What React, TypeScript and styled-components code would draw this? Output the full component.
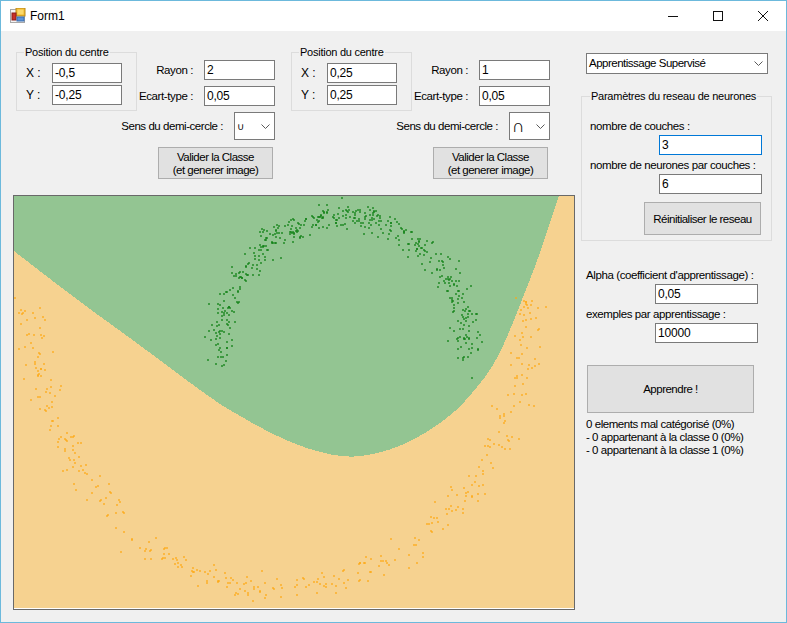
import * as React from 'react'
import styled, { createGlobalStyle } from 'styled-components'

const GlobalStyle = createGlobalStyle`
html, body {
  margin: 0;
  padding: 0;
  background: #f0f0f0;
  overflow: hidden;
}
* {
  box-sizing: border-box;
}
`

const Win = styled.div`
width: 787px;
height: 623px;
display: flex;
flex-direction: column;
border: 1px solid #6cb9dc;
background: #f0f0f0;
color: #000;
font-family: "Liberation Sans", Arial, sans-serif;
font-size: 11px;
line-height: 13px;
`

const TitleBar = styled.div`
height: 30px;
flex: none;
display: flex;
align-items: center;
background: #fff;
padding-left: 9px;
`

const TitleText = styled.span`
margin-left: 4px;
font-size: 12px;
flex: 1;
`

const WinButton = styled.div<{ $w?: number }>`
width: ${(p) => p.$w ?? 45}px;
height: 30px;
display: flex;
align-items: center;
justify-content: center;
color: #111;
`

const Body = styled.div`
flex: 1;
display: flex;
gap: 6px;
padding: 15px 0 0 12px;
`

const LeftColumn = styled.div`
width: 562px;
display: flex;
flex-direction: column;
`

const Panels = styled.div`
display: flex;
gap: 16px;
padding-left: 3px;
`

const Panel = styled.div`
width: 259px;
display: flex;
flex-direction: column;
align-items: flex-end;
`

const PanelTop = styled.div`
width: 100%;
display: flex;
`

const Group = styled.fieldset<{ $w: number; $h: number; $pad: number }>`
margin: 0;
width: ${(p) => p.$w}px;
height: ${(p) => p.$h}px;
padding: ${(p) => p.$pad}px 7px 0;
border: 1px solid #dcdcdc;
min-width: 0;
flex: none;
`

const GroupTitle = styled.legend`
padding: 0 1px;
height: 13px;
white-space: nowrap;
letter-spacing: -0.25px;
`

const CoordRow = styled.div`
display: flex;
align-items: center;
margin-bottom: 2px;
padding-left: 2px;
`

const CoordLabel = styled.span`
width: 26px;
font-size: 12px;
`

const Field = styled.div<{ $w: number; $active?: boolean }>`
width: ${(p) => p.$w}px;
height: 20px;
flex: none;
display: flex;
align-items: center;
padding: 0 2px;
background: #fff;
border: 1px solid ${(p) => (p.$active ? '#0078d7' : '#7a7a7a')};
font-size: 12px;
letter-spacing: -0.2px;
`

const Params = styled.div`
flex: 1;
min-width: 0;
display: flex;
flex-direction: column;
gap: 6px;
padding-top: 14px;
`

const ParamRow = styled.div`
display: flex;
align-items: center;
justify-content: flex-end;
gap: 11px;
`

const ParamLabel = styled.span`
font-size: 11.5px;
letter-spacing: -0.4px;
white-space: nowrap;
`

const SenseRow = styled.div`
display: flex;
align-items: center;
gap: 11px;
margin-top: 1px;
`

const Combo = styled.div<{ $w: number; $h: number }>`
width: ${(p) => p.$w}px;
height: ${(p) => p.$h}px;
display: flex;
align-items: center;
justify-content: space-between;
padding: 0 4px 0 2px;
background: #fff;
border: 1px solid #7a7a7a;
`

const ComboText = styled.span<{ $size: number }>`
font-size: ${(p) => p.$size}px;
white-space: nowrap;
font-family: "Liberation Sans", sans-serif;
`

const ComboLabel = styled.span`
font-size: 11.5px;
letter-spacing: -0.45px;
white-space: nowrap;
`

const ModeLabel = styled.span`
font-size: 11.5px;
letter-spacing: -0.5px;
white-space: nowrap;
`

const FormButton = styled.div<{ $w: number; $h: number }>`
width: ${(p) => p.$w}px;
height: ${(p) => p.$h}px;
display: flex;
align-items: center;
justify-content: center;
text-align: center;
padding-top: 1px;
background: #e1e1e1;
border: 1px solid #adadad;
font-size: 11.5px;
letter-spacing: -0.5px;
`

const ClassButton = styled(FormButton)`
margin: 7px 2px 0 0;
`

const PlotFrame = styled.div`
margin-top: 16px;
width: 562px;
height: 415px;
border: 1px solid #696969;
background: #fff;
padding: 0 1px 1px 0;
`

const PlotSvg = styled.svg`
display: block;
width: 560px;
height: 412px;
background: #93c592;
`

const RightColumn = styled.div`
width: 191px;
display: flex;
flex-direction: column;
padding-top: 7px;
`

const ModeCombo = styled(Combo)`
margin-left: 5px;
`

const NetGroup = styled(Group)`
margin-top: 16px;
padding-left: 8px;
`

const TextLine = styled.div<{ $top: number }>`
margin-top: ${(p) => p.$top}px;
font-size: 11.5px;
letter-spacing: -0.4px;
white-space: nowrap;
`

const NetField = styled(Field)`
margin: 2px 0 0 69px;
`

const ResetButton = styled(FormButton)`
margin: 8px 0 0 54px;
`

const TrainBlock = styled.div`
padding: 28px 0 0 5px;
`

const TrainField = styled(Field)`
margin: 2px 0 0 69px;
`

const TrainButton = styled(FormButton)`
margin: 22px 0 0 1px;
`

const Stats = styled.div`
margin-top: 5px;
font-size: 11.5px;
letter-spacing: -0.45px;
white-space: nowrap;
`

// seeded so the scatter is the same at every run
const mulberry = (seed: number) => () => {
    seed = (seed + 0x6d2b79f5) | 0
    let t = Math.imul(seed ^ (seed >>> 15), 1 | seed)
    t = (t + Math.imul(t ^ (t >>> 7), 61 | t)) ^ t
    return ((t ^ (t >>> 14)) >>> 0) / 4294967296
}

// plot origin on the page is (14,196), dots and outline are given relative to it
const halfEllipse = (seed: number, count: number, cx: number, cy: number, rx: number, ry: number, dir: 1 | -1, spread: number) => {
    const rnd = mulberry(seed)
    const gauss = () => Math.sqrt(-2 * Math.log(1 - rnd())) * Math.cos(2 * Math.PI * rnd())
    return Array.from({ length: count }, () => {
        const a = rnd() * Math.PI
        return {
            x: Math.round(cx + Math.cos(a) * rx + gauss() * spread - 14),
            y: Math.round(cy + dir * Math.sin(a) * ry + gauss() * spread - 196),
        }
    })
}

const greenDots = halfEllipse(7, 480, 344, 360, 126, 144, -1, 7)
const orangeDots = halfEllipse(23, 400, 280, 298, 250, 290, 1, 8)

const boundary = [
    [14, 251], [73, 297], [133, 340], [213, 400], [240, 416], [270, 433], [300, 446], [320, 452],
    [343, 457], [365, 456], [390, 450], [413, 440], [435, 427], [457, 410], [473, 392], [487, 375],
    [500, 353], [513, 323], [523, 297], [531, 277], [541, 250], [550, 222], [559, 196],
].map(([x, y]) => [x - 14, y - 196])

// smooth the boundary through the midpoints of its segments
const orangeArea = boundary.reduce((d, p, i) => {
    if (i === 0) return `M${p[0]} ${p[1]}`
    const next = boundary[i + 1] ?? p
    return `${d} Q${p[0]} ${p[1]} ${(p[0] + next[0]) / 2} ${(p[1] + next[1]) / 2}`
}, '') + ' L560 0 L560 412 L0 412 Z'

const Chevron = () => (
    <svg width="9" height="5" viewBox="0 0 9 5">
        <path d="M0.5 0.5 L4.5 4.5 L8.5 0.5" fill="none" stroke="#5a5a5a" strokeWidth="1" />
    </svg>
)

const AppIcon = () => (
    <svg width="16" height="16" viewBox="0 0 16 16">
        <rect x="0.5" y="1.5" width="14" height="13" fill="#f4f4f4" stroke="#a8a8a8" />
        <rect x="6" y="0" width="9" height="8" fill="#f2b92e" stroke="#b98a1c" strokeWidth="1" />
        <rect x="7.5" y="1.5" width="6" height="5" fill="#fbd96a" />
        <rect x="2" y="5" width="4" height="7" fill="#c9302a" stroke="#8c1f1a" strokeWidth="1" />
        <rect x="7" y="9" width="7" height="4" fill="#5b93d8" stroke="#3a6eb0" strokeWidth="1" />
    </svg>
)

const ClassPanel = ({ x, y, rayon, sens, sensSize }: { x: string; y: string; rayon: string; sens: string; sensSize: number }) => (
    <Panel>
        <PanelTop>
            <Group $w={121} $h={65} $pad={4}>
                <GroupTitle>Position du centre</GroupTitle>
                <CoordRow>
                    <CoordLabel>X :</CoordLabel>
                    <Field $w={70}>{x}</Field>
                </CoordRow>
                <CoordRow>
                    <CoordLabel>Y :</CoordLabel>
                    <Field $w={70}>{y}</Field>
                </CoordRow>
            </Group>
            <Params>
                <ParamRow>
                    <ParamLabel>Rayon :</ParamLabel>
                    <Field $w={71}>{rayon}</Field>
                </ParamRow>
                <ParamRow>
                    <ParamLabel>Ecart-type :</ParamLabel>
                    <Field $w={71}>0,05</Field>
                </ParamRow>
            </Params>
        </PanelTop>
        <SenseRow>
            <ComboLabel>Sens du demi-cercle :</ComboLabel>
            <Combo $w={41} $h={28}>
                <ComboText $size={sensSize}>{sens}</ComboText>
                <Chevron />
            </Combo>
        </SenseRow>
        <ClassButton $w={115} $h={32}>
            Valider la Classe
            <br />
            (et generer image)
        </ClassButton>
    </Panel>
)

export default function App() {
    return (
        <Win>
            <GlobalStyle />
            <TitleBar>
                <AppIcon />
                <TitleText>Form1</TitleText>
                <WinButton>
                    <svg width="10" height="10" viewBox="0 0 10 10">
                        <path d="M0 5.5 H10" stroke="currentColor" strokeWidth="1" />
                    </svg>
                </WinButton>
                <WinButton>
                    <svg width="10" height="10" viewBox="0 0 10 10">
                        <rect x="0.5" y="0.5" width="9" height="9" fill="none" stroke="currentColor" strokeWidth="1" />
                    </svg>
                </WinButton>
                <WinButton $w={46}>
                    <svg width="10" height="10" viewBox="0 0 10 10">
                        <path d="M0 0 L10 10 M10 0 L0 10" stroke="currentColor" strokeWidth="1" />
                    </svg>
                </WinButton>
            </TitleBar>
            <Body>
                <LeftColumn>
                    <Panels>
                        <ClassPanel x="-0,5" y="-0,25" rayon="2" sens="∪" sensSize={10} />
                        <ClassPanel x="0,25" y="0,25" rayon="1" sens="∩" sensSize={18} />
                    </Panels>
                    <PlotFrame>
                        <PlotSvg viewBox="0 0 560 412">
                            <path d={orangeArea} fill="#f6d290" shapeRendering="crispEdges" />
                            {greenDots.map((d, i) => (
                                <circle key={i} cx={d.x} cy={d.y} r="1" fill="#0f7f14" opacity="0.85" />
                            ))}
                            {orangeDots.map((d, i) => (
                                <circle key={i} cx={d.x} cy={d.y} r="1" fill="#ffa70f" opacity="0.8" />
                            ))}
                        </PlotSvg>
                    </PlotFrame>
                </LeftColumn>
                <RightColumn>
                    <ModeCombo $w={182} $h={21}>
                        <ModeLabel>Apprentissage Supervisé</ModeLabel>
                        <Chevron />
                    </ModeCombo>
                    <NetGroup $w={191} $h={151} $pad={16}>
                        <GroupTitle>Paramètres du reseau de neurones</GroupTitle>
                        <TextLine $top={1}>nombre de couches :</TextLine>
                        <NetField $w={103} $active>3</NetField>
                        <TextLine $top={4}>nombre de neurones par couches :</TextLine>
                        <NetField $w={103}>6</NetField>
                        <ResetButton $w={117} $h={33}>Réinitialiser le reseau</ResetButton>
                    </NetGroup>
                    <TrainBlock>
                        <TextLine $top={0}>Alpha (coefficient d'apprentissage) :</TextLine>
                        <TrainField $w={103}>0,05</TrainField>
                        <TextLine $top={4}>exemples par apprentissage :</TextLine>
                        <TrainField $w={103}>10000</TrainField>
                        <TrainButton $w={167} $h={48}>Apprendre !</TrainButton>
                        <Stats>
                            0 elements mal catégorisé (0%)
                            <br />
                            - 0 appartenant à la classe 0 (0%)
                            <br />
                            - 0 appartenant à la classe 1 (0%)
                        </Stats>
                    </TrainBlock>
                </RightColumn>
            </Body>
        </Win>
    )
}
